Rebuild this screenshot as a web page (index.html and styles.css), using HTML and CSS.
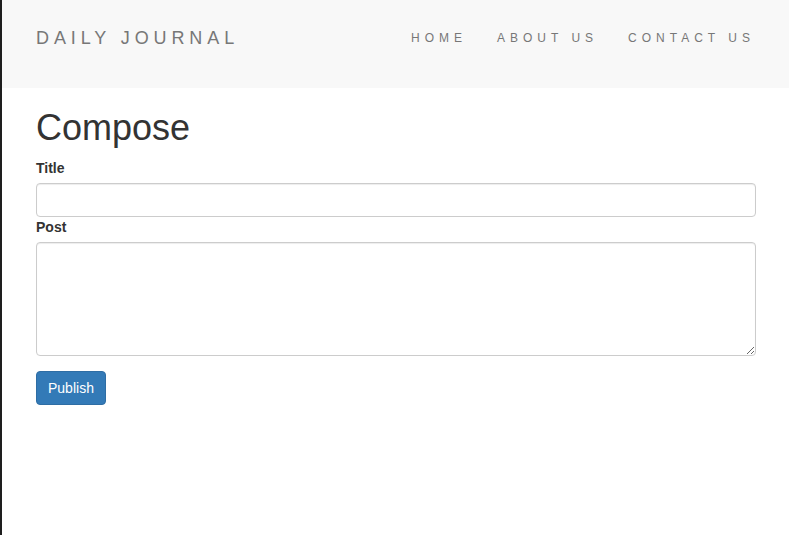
FILE: index.html
```html
<!DOCTYPE html>
<html lang="en">
<head>
<meta charset="utf-8">
<title>Daily Journal</title>
<link rel="stylesheet" href="styles.css">
</head>
<body>
<div class="page">
  <nav class="navbar">
    <div class="container nav-inner">
      <a class="brand" href="#">DAILY JOURNAL</a>
      <ul class="nav-links">
        <li><a href="#">HOME</a></li>
        <li><a href="#">ABOUT US</a></li>
        <li><a href="#">CONTACT US</a></li>
      </ul>
    </div>
  </nav>
  <main class="container content">
    <h1 class="title">Compose</h1>
    <form class="compose">
      <label class="label" for="t">Title</label>
      <input class="field" id="t" type="text">
      <label class="label" for="p">Post</label>
      <textarea class="field area" id="p" rows="5"></textarea>
      <button class="btn" type="button">Publish</button>
    </form>
  </main>
</div>
</body>
</html>
```

FILE: styles.css
```css
* { box-sizing: border-box; }
html, body { margin: 0; height: 100%; }
body {
  font-family: "Liberation Sans", Arial, sans-serif;
  font-size: 14px;
  line-height: 20px;
  color: #333;
  background: #fff;
}
.page {
  min-height: 100%;
  border-left: 2px solid #1e1e1e;
}
.container {
  padding: 0 33px 0 34px;
}
.navbar {
  background: #f8f8f8;
  height: 88px;
}
.nav-inner {
  height: 100%;
  padding-right: 34px;
  display: flex;
  align-items: center;
  justify-content: space-between;
}
.brand {
  color: #777;
  font-size: 18px;
  letter-spacing: 4.9px;
  text-decoration: none;
  line-height: 20px;
  margin-top: -13px;
}
.nav-links {
  list-style: none;
  margin: -13px 0 0;
  padding: 0;
  display: flex;
  gap: 30px;
}
.nav-links a {
  color: #777;
  font-size: 12px;
  letter-spacing: 5px;
  text-decoration: none;
}
.title {
  font-size: 36px;
  font-weight: 500;
  line-height: 1.1;
  margin: 20px 0 10px;
}
.compose {
  display: flex;
  flex-direction: column;
  align-items: flex-start;
}
.label {
  font-weight: bold;
  margin-bottom: 5px;
}
.field {
  width: 100%;
  height: 34px;
  border: 1px solid #ccc;
  border-radius: 4px;
  box-shadow: inset 0 1px 1px rgba(0,0,0,.075);
  padding: 6px 12px;
  font: inherit;
}
.area {
  height: 114px;
  resize: vertical;
}
.btn {
  margin-top: 15px;
  height: 34px;
  padding: 6px 11px;
  background: #337ab7;
  border: 1px solid #2e6da4;
  border-radius: 4px;
  color: #fff;
  font: inherit;
}
```
